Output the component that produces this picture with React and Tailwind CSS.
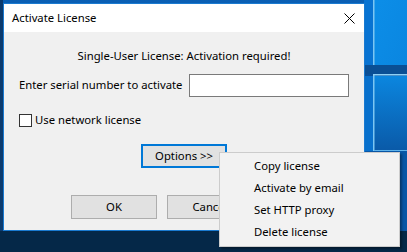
import React from "react";

const font = { fontFamily: '"Noto Sans", "Open Sans", sans-serif' };

const Wallpaper = () => (
  <svg className="absolute inset-0" width="407" height="252" viewBox="0 0 407 252">
    <defs>
      <linearGradient id="bgGrad" x1="0" y1="0" x2="0" y2="1">
        <stop offset="0" stopColor="#0a5fb4" />
        <stop offset="0.7" stopColor="#063d7a" />
        <stop offset="1" stopColor="#03203f" />
      </linearGradient>
      <linearGradient id="paneTop" x1="0" y1="0" x2="1" y2="1">
        <stop offset="0" stopColor="#0c8ee8" />
        <stop offset="1" stopColor="#0a86e0" />
      </linearGradient>
      <linearGradient id="paneBottom" x1="0" y1="0" x2="0" y2="1">
        <stop offset="0" stopColor="#0b86df" />
        <stop offset="1" stopColor="#0a5aa8" />
      </linearGradient>
    </defs>
    <rect width="407" height="252" fill="url(#bgGrad)" />
    <rect x="364" y="0" width="10" height="65" fill="#0873d2" />
    <rect x="374" y="0" width="33" height="65" fill="url(#paneTop)" />
    <rect x="364" y="65" width="43" height="9" fill="#0a4f95" />
    <rect x="364" y="76" width="10" height="80" fill="#0870cc" />
    <rect x="374" y="76" width="33" height="74" fill="url(#paneBottom)" />
    <rect x="373" y="0" width="1.5" height="65" fill="#7cc6f2" />
    <rect x="373" y="74" width="1.5" height="80" fill="#7cc6f2" />
    <rect x="373" y="74" width="34" height="1.5" fill="#8ed0f5" />
    <rect x="374" y="150" width="33" height="1" fill="#5fb2ea" />
    <rect x="364" y="151" width="43" height="80" fill="#0856a6" />
    <rect x="0" y="231" width="407" height="21" fill="#052848" />
    <rect x="0" y="0" width="3" height="231" fill="#0b3a6e" />
  </svg>
);

const Button = ({ children, focused, className = "" }) => (
  <div
    className={`flex items-center justify-center h-[24px] w-[86px] bg-[#e1e1e1] text-black ${
      focused ? "border-2 border-[#0078d7]" : "border border-[#adadad]"
    } ${className}`}
  >
    {children}
  </div>
);

const menuItems = ["Copy license", "Activate by email", "Set HTTP proxy", "Delete license"];

export default function App() {
  return (
    <div className="relative w-[407px] h-[252px] overflow-hidden text-[11.3px]" style={font}>
      <Wallpaper />

      <div className="absolute left-[3px] top-[3px] w-[362px] h-[228px] border border-[#1a7ad0] bg-[#f0f0f0] flex flex-col">
        <div className="h-[28px] bg-white flex items-center justify-between pl-[8px] pr-[9px]">
          <span className="text-black">Activate License</span>
          <svg width="11" height="11" viewBox="0 0 11 11">
            <path d="M0.5 0.5 L10.5 10.5 M10.5 0.5 L0.5 10.5" stroke="#000" strokeWidth="1" />
          </svg>
        </div>

        <div className="flex flex-col pt-[16px] text-black">
          <div className="h-[16px] leading-[16px] text-center">Single-User License: Activation required!</div>

          <div className="mt-[10px] pl-[15px] flex items-center h-[23px]">
            <span className="w-[170px] whitespace-nowrap">Enter serial number to activate</span>
            <div className="w-[160px] h-[23px] bg-white border border-[#7a7a7a]" />
          </div>

          <div className="mt-[15px] pl-[15px] flex items-center h-[16px]">
            <div className="w-[13px] h-[13px] bg-white border border-[#333333]" />
            <span className="ml-[3px]">Use network license</span>
          </div>

          <div className="mt-[16px] flex justify-center">
            <Button focused>Options &gt;&gt;</Button>
          </div>

          <div className="mt-[27px] pl-[67px] flex gap-[10px]">
            <Button>OK</Button>
            <Button>Cancel</Button>
          </div>
        </div>
      </div>

      <div className="absolute left-[219px] top-[152px] w-[181px] h-[95px] bg-[#f2f2f2] border border-[#cccccc] shadow-[2px_2px_2px_rgba(0,0,0,0.35)] pt-[2px] text-black">
        {menuItems.map((item) => (
          <div key={item} className="h-[22px] leading-[22px] pl-[34px]">
            {item}
          </div>
        ))}
      </div>
    </div>
  );
}
